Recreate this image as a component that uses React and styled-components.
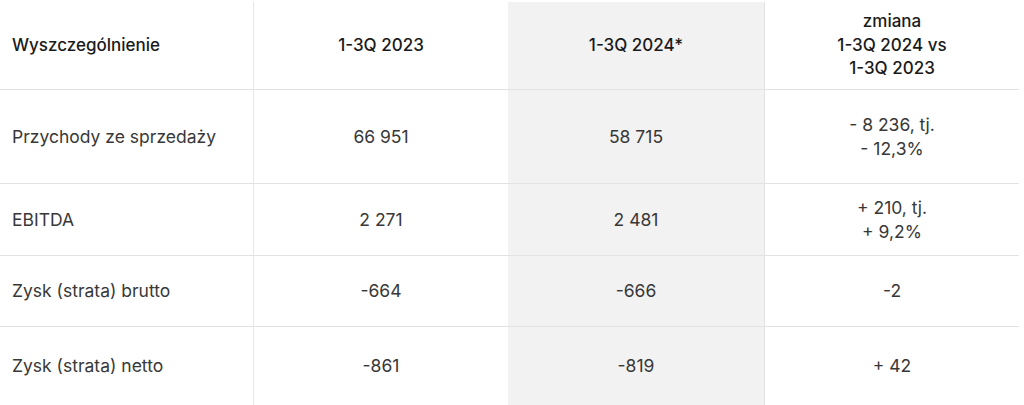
import React from 'react'
import styled, { createGlobalStyle } from 'styled-components'

const GlobalStyle = createGlobalStyle`
  *, *::before, *::after {
    box-sizing: border-box;
  }
  body {
    margin: 0;
    background: #fff;
    font-family: Inter, "Noto Sans", "Liberation Sans", sans-serif;
  }
`

const rows = [
  { label: 'Przychody ze sprzedaży', a: '66 951', b: '58 715', diff: ['- 8 236, tj.', '- 12,3%'], height: 94 },
  { label: 'EBITDA', a: '2 271', b: '2 481', diff: ['+ 210, tj.', '+ 9,2%'], height: 72 },
  { label: 'Zysk (strata) brutto', a: '-664', b: '-666', diff: ['-2'], height: 71 },
  { label: 'Zysk (strata) netto', a: '-861', b: '-819', diff: ['+ 42'], height: 78 },
]

const App = () => {
  return (
    <>
      <GlobalStyle />
      <Table>
        <Row height={88}>
          <Cell head left>Wyszczególnienie</Cell>
          <Cell head>1-3Q 2023</Cell>
          <Cell head shaded>1-3Q 2024*</Cell>
          <Cell head divider>
            <span>zmiana</span>
            <span>1-3Q 2024 vs</span>
            <span>1-3Q 2023</span>
          </Cell>
        </Row>
        {rows.map((r) => (
          <Row key={r.label} height={r.height}>
            <Cell left>{r.label}</Cell>
            <Cell>{r.a}</Cell>
            <Cell shaded>{r.b}</Cell>
            <Cell divider>
              {r.diff.map((d) => (
                <span key={d}>{d}</span>
              ))}
            </Cell>
          </Row>
        ))}
      </Table>
    </>
  )
}

const Table = styled.div`
  width: 1019px;
  padding-top: 2px;
`

const Row = styled.div`
  display: grid;
  grid-template-columns: 254px 254px 256px 255px;
  height: ${(p) => p.height}px;
  border-bottom: 1px solid #e2e2e2;
  &:last-child {
    border-bottom: none;
  }
`

const Cell = styled.div`
  display: flex;
  flex-direction: column;
  justify-content: center;
  align-items: ${(p) => (p.left ? 'flex-start' : 'center')};
  text-align: ${(p) => (p.left ? 'left' : 'center')};
  padding: 0 ${(p) => (p.left ? '12px' : '8px')};
  font-size: ${(p) => (p.head ? '17px' : '17.5px')};
  line-height: 23.5px;
  font-weight: ${(p) => (p.head ? 500 : 400)};
  color: ${(p) => (p.head ? '#1a1a1a' : '#383838')};
  background: ${(p) => (p.shaded ? '#f2f2f2' : 'transparent')};
  border-right: ${(p) => (p.left ? '1px solid #e6e6e6' : 'none')};
  border-left: ${(p) => (p.divider ? '1px solid #e2e2e2' : 'none')};
`

export default App
